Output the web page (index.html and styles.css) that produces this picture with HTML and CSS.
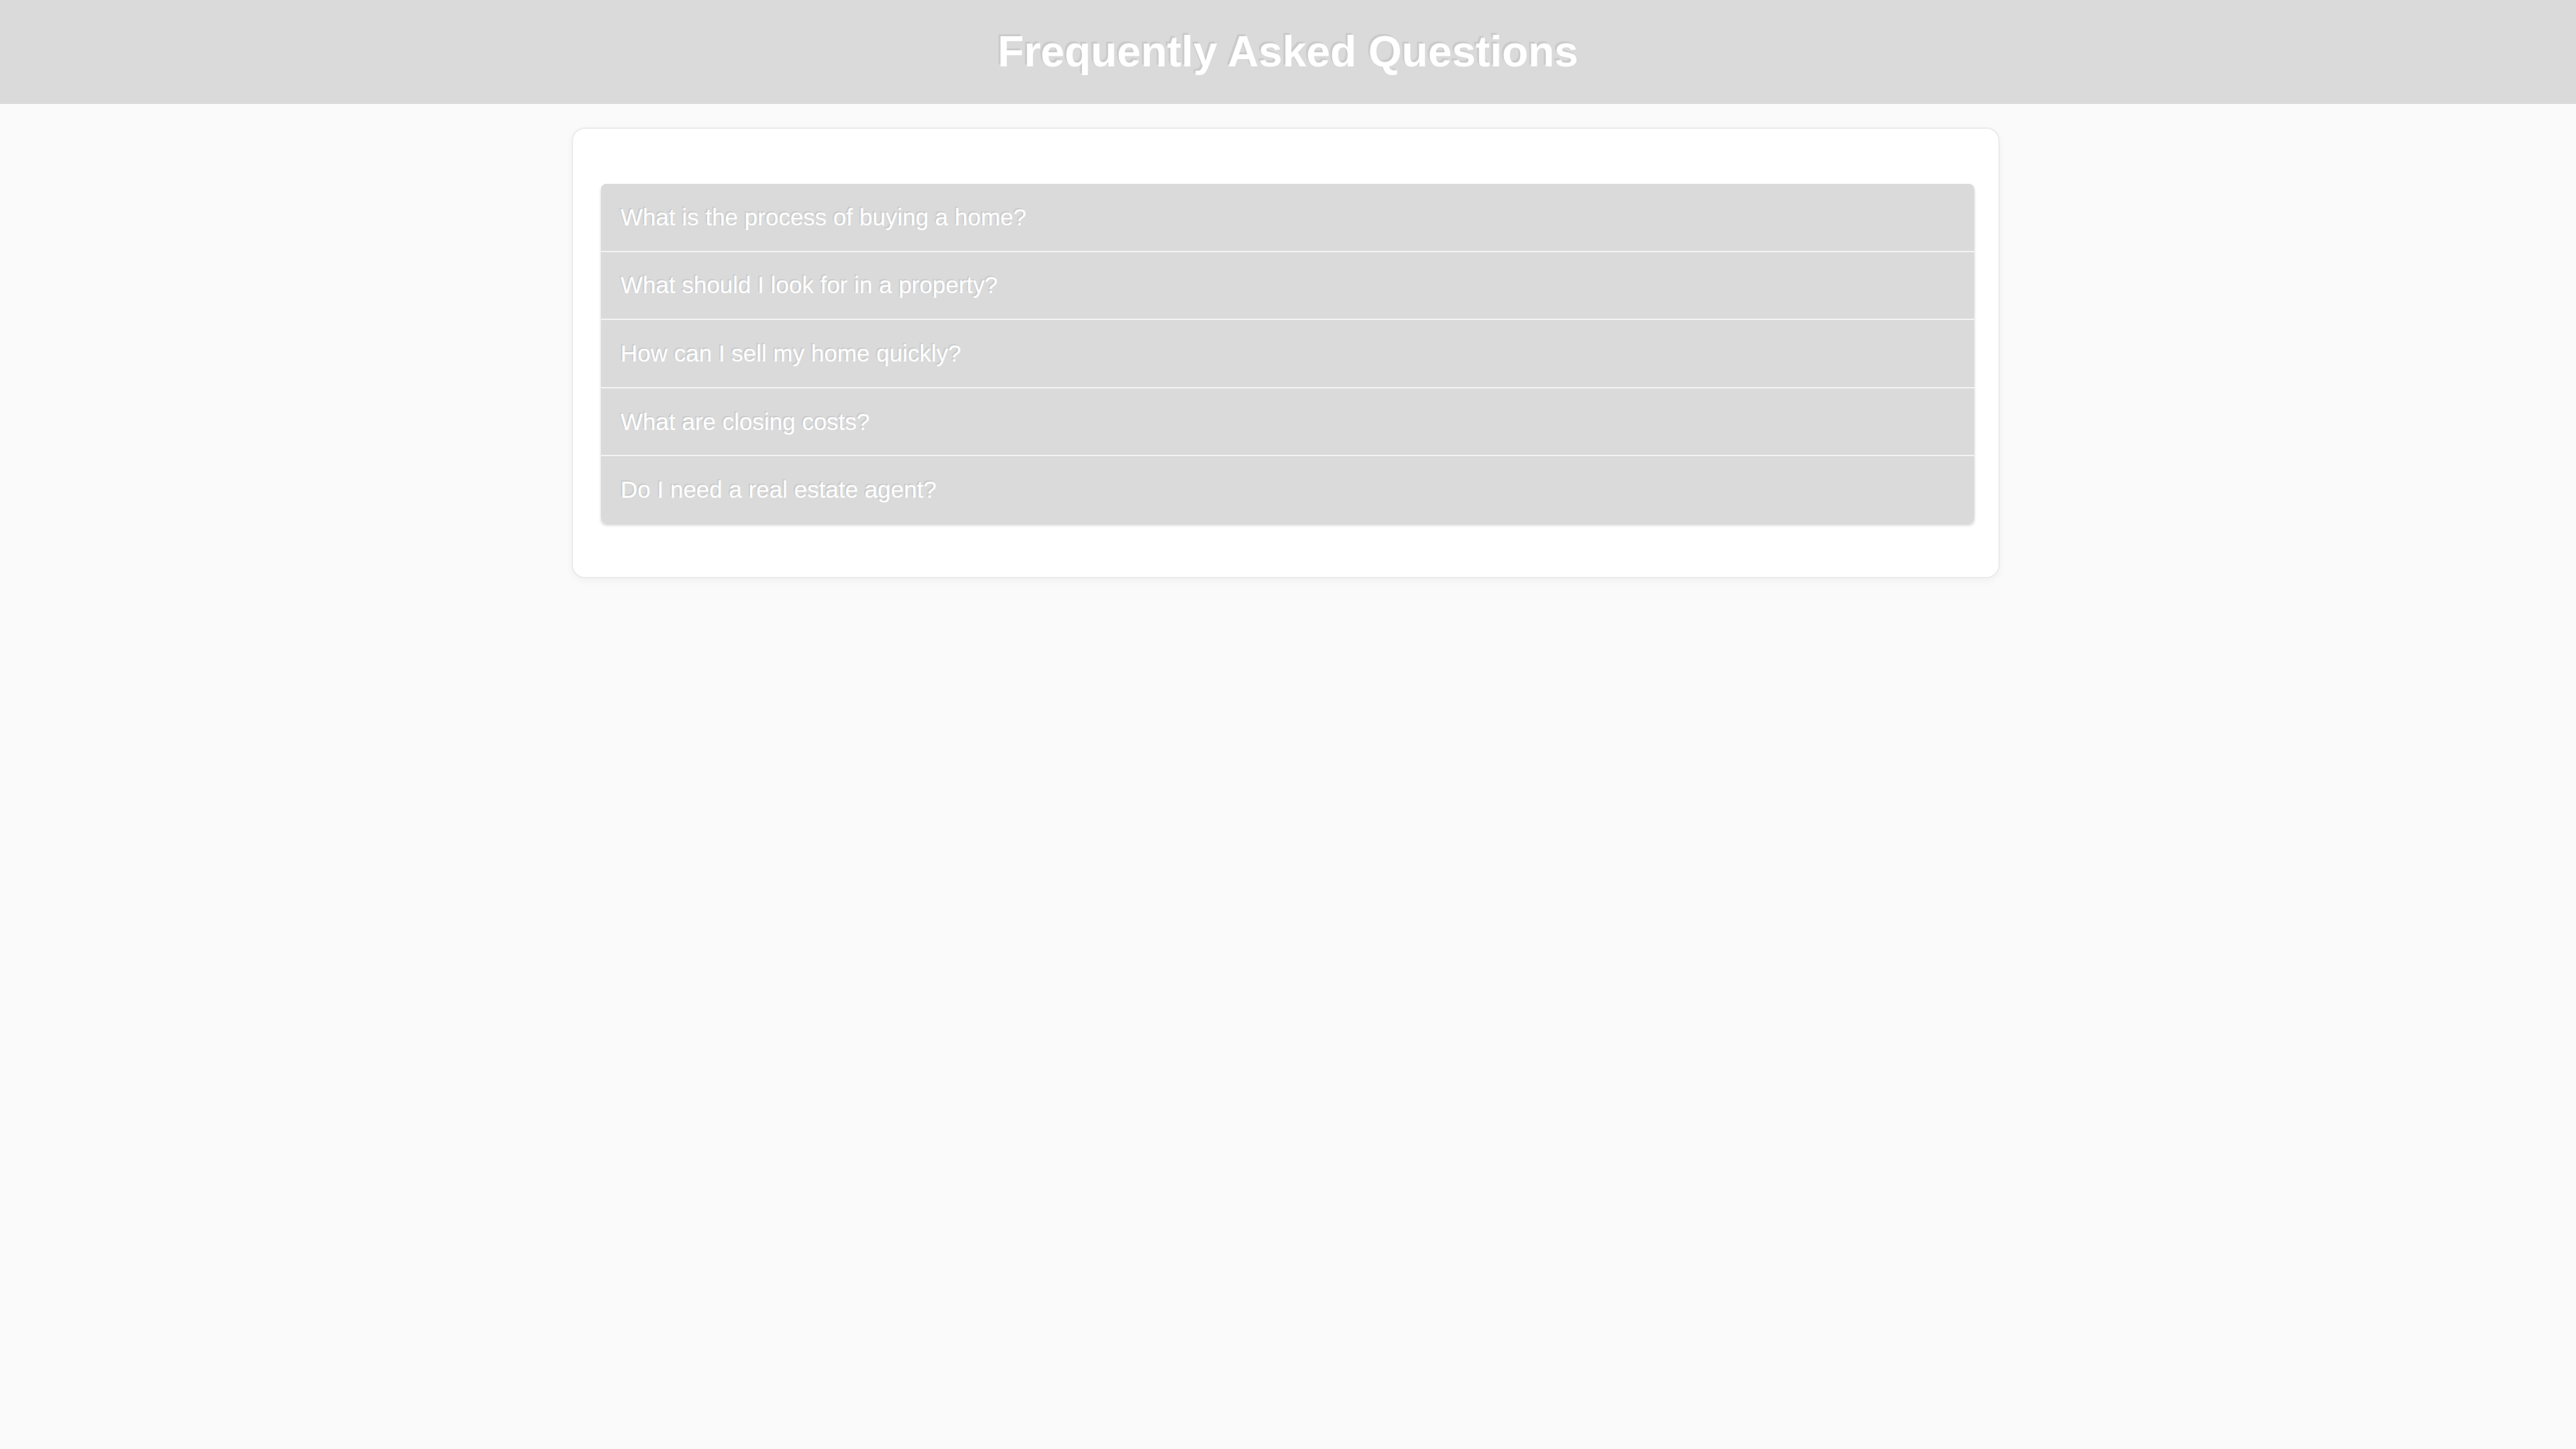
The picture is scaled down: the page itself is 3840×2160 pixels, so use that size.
FILE: index.html
```html
<!DOCTYPE html>
<html lang="en">
<head>
<meta charset="utf-8">
<title>Frequently Asked Questions</title>
<link rel="stylesheet" href="styles.css">
</head>
<body>
<header class="site-header">
  <h1 class="site-title">Frequently Asked Questions</h1>
</header>
<main class="faq-card">
  <div class="faq-list">
    <div class="faq-item">What is the process of buying a home?</div>
    <div class="faq-item">What should I look for in a property?</div>
    <div class="faq-item">How can I sell my home quickly?</div>
    <div class="faq-item">What are closing costs?</div>
    <div class="faq-item">Do I need a real estate agent?</div>
  </div>
</main>
</body>
</html>
```
FILE: styles.css
```css
* { box-sizing: border-box; }

html, body {
  margin: 0;
  padding: 0;
}

body {
  background: #fafafa;
  font-family: "Liberation Sans", Arial, sans-serif;
  min-height: 2160px;
}

.site-header {
  background: #dadada;
  padding: 40px 0 41px;
  text-align: center;
}

.site-title {
  margin: 0;
  font-size: 64px;
  font-weight: bold;
  line-height: normal;
  color: #ffffff;
  text-shadow: -3px -3px 1px rgba(0, 0, 0, 0.07);
}

.faq-card {
  display: block;
  width: 2129px;
  margin: 35px 0 0 calc(50% - 1068px);
  padding: 82px 36px 80px 42px;
  background: #ffffff;
  border: 2px solid #ebebeb;
  border-radius: 20px;
  box-shadow: 0 4px 12px rgba(0, 0, 0, 0.04);
}

.faq-list {
  display: flex;
  flex-direction: column;
  border-radius: 8px;
  overflow: hidden;
  box-shadow: 0 3px 4px rgba(0, 0, 0, 0.18);
}

.faq-item {
  background: #dadada;
  color: #ffffff;
  font-size: 35px;
  line-height: normal;
  padding: 29.8px 29px;
  text-shadow: -2px -2px 1px rgba(0, 0, 0, 0.07);
}

.faq-item + .faq-item {
  border-top: 2px solid #f3f3f3;
}
```
